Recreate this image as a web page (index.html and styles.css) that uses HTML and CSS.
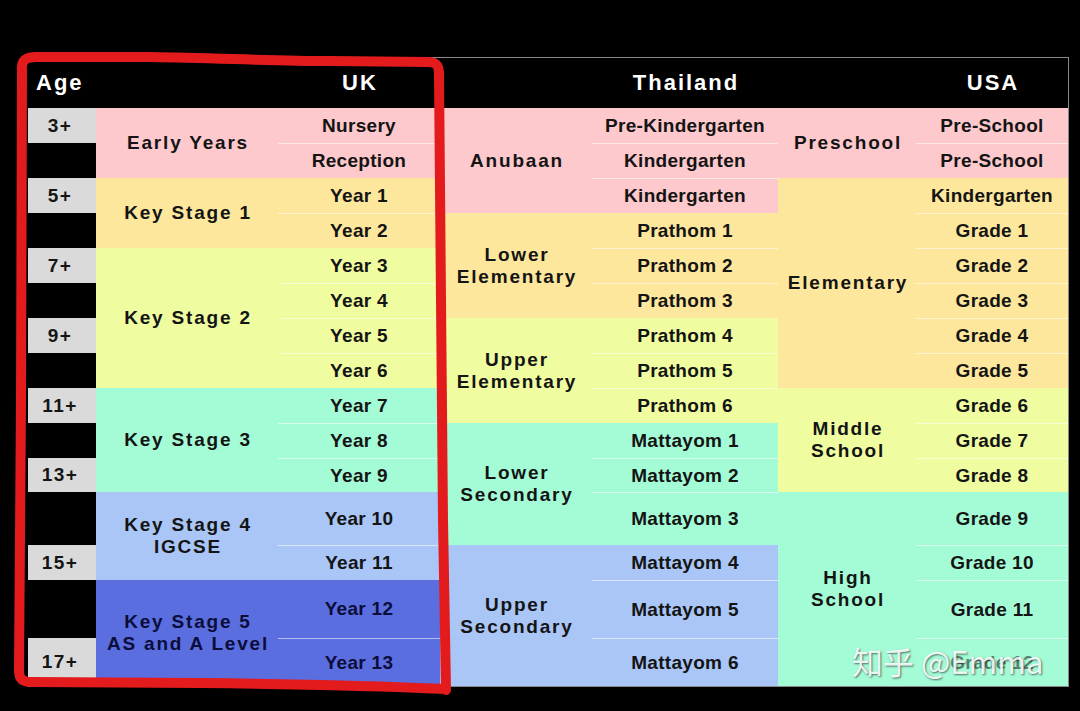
FILE: index.html
```html
<!DOCTYPE html>
<html>
<head>
<meta charset="utf-8">
<link rel="stylesheet" href="styles.css">
</head>
<body>
<div class="page">
  <div class="table">
    <div class="head">
      <div class="hc w-age left">Age</div>
      <div class="hc w-ukstage"></div>
      <div class="hc w-ukyear">UK</div>
      <div class="hc w-thstage"></div>
      <div class="hc w-thyear">Thailand</div>
      <div class="hc w-usstage"></div>
      <div class="hc w-usyear">USA</div>
    </div>
    <div class="body">
      <div class="col w-age">
        <div class="age gray h35">3+</div>
        <div class="age h35"></div>
        <div class="age gray h35">5+</div>
        <div class="age h35"></div>
        <div class="age gray h35">7+</div>
        <div class="age h35"></div>
        <div class="age gray h35">9+</div>
        <div class="age h35"></div>
        <div class="age gray h35">11+</div>
        <div class="age h35"></div>
        <div class="age gray h34">13+</div>
        <div class="age h53"></div>
        <div class="age gray h35">15+</div>
        <div class="age h58"></div>
        <div class="age gray h48">17+</div>
      </div>

      <div class="col">
        <div class="group pink">
          <div class="stage w-ukstage">Early Years</div>
          <div class="subs w-ukyear"><div class="sub h35">Nursery</div><div class="sub h35">Reception</div></div>
        </div>
        <div class="group orange">
          <div class="stage w-ukstage">Key Stage 1</div>
          <div class="subs w-ukyear"><div class="sub h35">Year 1</div><div class="sub h35">Year 2</div></div>
        </div>
        <div class="group ygreen">
          <div class="stage w-ukstage">Key Stage 2</div>
          <div class="subs w-ukyear"><div class="sub h35">Year 3</div><div class="sub h35">Year 4</div><div class="sub h35">Year 5</div><div class="sub h35">Year 6</div></div>
        </div>
        <div class="group aqua">
          <div class="stage w-ukstage">Key Stage 3</div>
          <div class="subs w-ukyear"><div class="sub h35">Year 7</div><div class="sub h35">Year 8</div><div class="sub h34">Year 9</div></div>
        </div>
        <div class="group lblue">
          <div class="stage w-ukstage">Key Stage 4<br>IGCSE</div>
          <div class="subs w-ukyear"><div class="sub h53">Year 10</div><div class="sub h35">Year 11</div></div>
        </div>
        <div class="group dblue">
          <div class="stage w-ukstage">Key Stage 5<br>AS and A Level</div>
          <div class="subs w-ukyear"><div class="sub h58">Year 12</div><div class="sub h48">Year 13</div></div>
        </div>
      </div>

      <div class="col">
        <div class="group pink">
          <div class="stage w-thstage">Anubaan</div>
          <div class="subs w-thyear"><div class="sub h35">Pre-Kindergarten</div><div class="sub h35">Kindergarten</div><div class="sub h35">Kindergarten</div></div>
        </div>
        <div class="group orange">
          <div class="stage w-thstage">Lower<br>Elementary</div>
          <div class="subs w-thyear"><div class="sub h35">Prathom 1</div><div class="sub h35">Prathom 2</div><div class="sub h35">Prathom 3</div></div>
        </div>
        <div class="group ygreen">
          <div class="stage w-thstage">Upper<br>Elementary</div>
          <div class="subs w-thyear"><div class="sub h35">Prathom 4</div><div class="sub h35">Prathom 5</div><div class="sub h35">Prathom 6</div></div>
        </div>
        <div class="group aqua">
          <div class="stage w-thstage">Lower<br>Secondary</div>
          <div class="subs w-thyear"><div class="sub h35">Mattayom 1</div><div class="sub h34">Mattayom 2</div><div class="sub h53">Mattayom 3</div></div>
        </div>
        <div class="group lblue">
          <div class="stage w-thstage">Upper<br>Secondary</div>
          <div class="subs w-thyear"><div class="sub h35">Mattayom 4</div><div class="sub h58">Mattayom 5</div><div class="sub h48">Mattayom 6</div></div>
        </div>
      </div>

      <div class="col">
        <div class="group pink">
          <div class="stage w-usstage">Preschool</div>
          <div class="subs w-usyear"><div class="sub h35">Pre-School</div><div class="sub h35">Pre-School</div></div>
        </div>
        <div class="group orange">
          <div class="stage w-usstage">Elementary</div>
          <div class="subs w-usyear"><div class="sub h35">Kindergarten</div><div class="sub h35">Grade 1</div><div class="sub h35">Grade 2</div><div class="sub h35">Grade 3</div><div class="sub h35">Grade 4</div><div class="sub h35">Grade 5</div></div>
        </div>
        <div class="group ygreen">
          <div class="stage w-usstage">Middle<br>School</div>
          <div class="subs w-usyear"><div class="sub h35">Grade 6</div><div class="sub h35">Grade 7</div><div class="sub h34">Grade 8</div></div>
        </div>
        <div class="group aqua">
          <div class="stage w-usstage">High<br>School</div>
          <div class="subs w-usyear"><div class="sub h53">Grade 9</div><div class="sub h35">Grade 10</div><div class="sub h58">Grade 11</div><div class="sub h48 under-mark">Grade 12</div></div>
        </div>
      </div>
    </div>
  </div>

  <svg class="marker" width="1080" height="711" viewBox="0 0 1080 711">
    <path d="M22 70 C21 60 26 57 36 57 L150 57 C220 58 270 61 330 61 L428 62 C437 62 439 66 439 74 L441 300 L443 520 L446 690 M446 689 C380 686 300 684 200 683 L32 682 C22 682 19 679 19 670 L21 400 L22 70"
      fill="none" stroke="#e31b1d" stroke-width="10" stroke-linecap="round" stroke-linejoin="round"/>
  </svg>

  <div class="watermark">知乎 @Emma</div>
</div>
</body>
</html>
```

FILE: styles.css
```css
html, body {
  margin: 0;
  padding: 0;
  background: #000;
}

.page {
  position: relative;
  width: 1080px;
  height: 711px;
  overflow: hidden;
  background: #000;
  box-sizing: border-box;
  padding: 57px 0 0 27px;
  font-family: "Liberation Sans", Arial, sans-serif;
}

.table {
  display: inline-flex;
  flex-direction: column;
  border: 1px solid #8a8a8a;
  border-left-color: #000;
}

.head {
  display: flex;
  height: 50px;
  background: #000;
}

.hc {
  display: flex;
  align-items: center;
  justify-content: center;
  color: #fff;
  font-weight: bold;
  font-size: 22px;
  letter-spacing: 2px;
  padding-left: 2px;
  box-sizing: border-box;
}

.hc.left {
  justify-content: flex-start;
  padding-left: 8px;
}

.w-age { width: 68px; }
.w-ukstage { width: 182px; }
.w-ukyear { width: 162px; }
.w-thstage { width: 152px; }
.w-thyear { width: 186px; }
.w-usstage { width: 138px; }
.w-usyear { width: 152px; }

.body {
  display: flex;
}

.col {
  display: flex;
  flex-direction: column;
}

.age {
  display: flex;
  align-items: center;
  justify-content: center;
  background: #000;
  color: #151515;
  font-weight: bold;
  font-size: 19px;
  letter-spacing: 1.5px;
  padding-right: 4px;
  box-sizing: border-box;
}

.age.gray { background: #dadada; }

.h34 { height: 34px; }
.h35 { height: 35px; }
.h48 { height: 48px; }
.h53 { height: 53px; }
.h58 { height: 58px; }

.group {
  display: flex;
  color: #141414;
}

.stage {
  display: flex;
  align-items: center;
  justify-content: center;
  text-align: center;
  font-weight: bold;
  font-size: 19px;
  letter-spacing: 1.8px;
  line-height: 22px;
  padding-left: 2px;
  box-sizing: border-box;
}

.subs {
  display: flex;
  flex-direction: column;
}

.sub {
  display: flex;
  align-items: center;
  justify-content: center;
  font-weight: bold;
  font-size: 19px;
  letter-spacing: 0.3px;
  box-sizing: border-box;
}

.sub + .sub {
  border-top: 1px solid rgba(255, 255, 255, 0.55);
}

.under-mark {
  color: rgba(20, 20, 20, 0.55);
}

.pink { background: #fdc9cd; }
.orange { background: #fde79c; }
.ygreen { background: #effca0; }
.aqua { background: #a4fcd7; }
.lblue { background: #a9c6f7; }
.dblue { background: #5a6ee0; color: #0b0d3a; }

.marker {
  position: absolute;
  left: 0;
  top: 0;
  pointer-events: none;
}

.watermark {
  position: absolute;
  left: 852px;
  top: 641px;
  font-family: "Noto Sans CJK SC", "Liberation Sans", sans-serif;
  font-size: 31px;
  line-height: 40px;
  color: rgba(255, 255, 255, 0.9);
  text-shadow: 1px 1px 2px rgba(0, 0, 0, 0.55);
  white-space: nowrap;
}
```
